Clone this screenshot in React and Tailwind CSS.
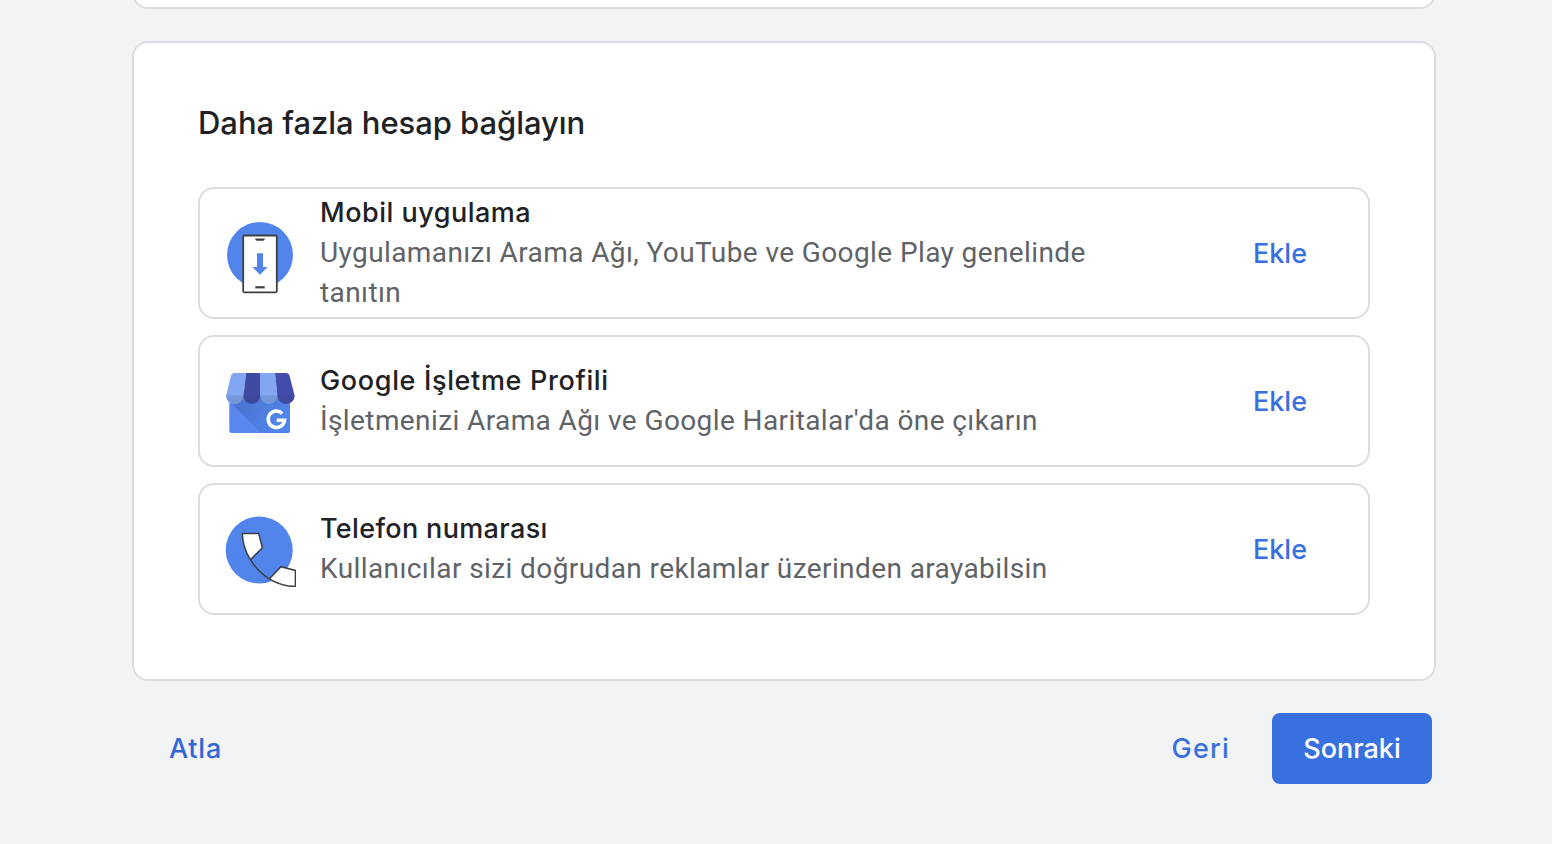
import React from 'react';

const MobileAppIcon = () => (
  <svg viewBox="0 0 72 72" className="w-[72px] h-[72px] overflow-visible" fill="none">
    <circle cx="36" cy="36" r="33" fill="#5285ec" />
    <rect x="19.2" y="16.5" width="33.6" height="56.8" rx="1.2" fill="#fff" stroke="#3c4043" strokeWidth="1.8" />
    <path d="M31 19.500h10c-.6 1.700-1.400 2.300-2.600 2.300h-4.800c-1.200 0-2-.6-2.600-2.300z" fill="#3c4043" />
    <path d="M31.300 68.300h9.400" stroke="#3c4043" strokeWidth="2.200" />
    <path d="M33 34.300h6v13.700h4.600L36 55.800l-7.600-7.800H33z" fill="#5285ec" />
  </svg>
);

const BusinessProfileIcon = () => (
  <svg viewBox="0 0 72 72" className="w-[72px] h-[72px]" fill="none">
    <defs>
      <linearGradient id="store-shade" x1="18" y1="36" x2="56" y2="60" gradientUnits="userSpaceOnUse">
        <stop offset="0" stopColor="#4a76d2" />
        <stop offset="1" stopColor="#5285ec" />
      </linearGradient>
    </defs>
    <rect x="5.3" y="24" width="60.7" height="42" rx="2.5" fill="#5a87ee" />
    <path d="M7 36l30 30h26.500a2.500 2.500 0 0 0 2.500-2.500V30H7z" fill="url(#store-shade)" />
    {/* awning */}
    <path d="M10 6h12l-2.500 23H2L7 8.500Q7.600 6 10 6z" fill="#82a7f0" />
    <path d="M22 6h14v23H19.500z" fill="#3f4aa3" />
    <path d="M36 6h15l2.500 23H36z" fill="#82a7f0" />
    <path d="M51 6h11.500q2.400 0 3 2.500L70.700 29H53.500z" fill="#424caa" />
    <path d="M2 28.500h17.500a8.750 8.750 0 0 1-17.500 0z" fill="#7597d8" />
    <path d="M19.500 28.500H36.200a8.350 8.350 0 0 1-16.700 0z" fill="#3d479b" />
    <path d="M36.200 28.500h17.300a8.650 8.650 0 0 1-17.300 0z" fill="#7597d8" />
    <path d="M53.500 28.500h17.200a8.600 8.600 0 0 1-17.200 0z" fill="#3f499f" />
    <path d="M58.200 46.500A8.200 8.200 0 1 0 60.500 53.200H52.700" stroke="#fff" strokeWidth="3.500" />
  </svg>
);

const PhoneIcon = () => (
  <svg viewBox="0 0 72 72" className="w-[72px] h-[72px]" fill="none">
    <circle cx="35.2" cy="35" r="33.5" fill="#5285ec" />
    <g stroke="#3c4043" strokeWidth="1.500">
      <path d="M18.400 18.400h16.300l3.700 14.300-12 12C21.400 36.500 18.400 27.500 18.400 18.400z" fill="#fff" />
      <path d="M26.400 44.700C31 52.500 37.500 59 45.200 63.900" />
      <path d="M45.200 63.900L57 51.700l14.400 3.700v16.200C62 71.400 53 68.700 45.200 63.900z" fill="#fff" />
    </g>
  </svg>
);

const accounts = [
  {
    title: 'Mobil uygulama',
    description: 'Uygulamanızı Arama Ağı, YouTube ve Google Play genelinde tanıtın',
    icon: MobileAppIcon,
    titleClass: 'tracking-[0.5px]',
  },
  {
    title: 'Google İşletme Profili',
    description: "İşletmenizi Arama Ağı ve Google Haritalar'da öne çıkarın",
    icon: BusinessProfileIcon,
    titleClass: 'tracking-[0.65px]',
  },
  {
    title: 'Telefon numarası',
    description: 'Kullanıcılar sizi doğrudan reklamlar üzerinden arayabilsin',
    icon: PhoneIcon,
    titleClass: 'tracking-[0.35px]',
  },
];

const AccountRow = ({ title, description, icon: Icon, titleClass }) => (
  <div className="flex h-[132px] items-center rounded-2xl border-2 border-[#dadce0] pl-6 pr-[61px]">
    <div className="mr-6 shrink-0 pt-1">
      <Icon />
    </div>
    <div className="w-[800px] leading-10">
      <h3 className={`text-[27px] font-medium text-[#202124] ${titleClass}`}>{title}</h3>
      <p className="font-[Roboto,sans-serif] text-[28px] tracking-[0.4px] text-[#5f6368]">{description}</p>
    </div>
    <button className="ml-auto pt-0.5 text-[27px] font-medium text-[#3870e0]">Ekle</button>
  </div>
);

const App = () => {
  return (
    <div className="flex h-[844px] flex-col overflow-hidden bg-[#f1f3f4] pl-[132px] pr-[116px] font-[Inter,sans-serif]">
      {/* end of the previous section */}
      <div className="-mt-8 h-[41px] shrink-0 rounded-2xl border-2 border-[#dadce0] bg-white" />

      <section className="mt-8 h-[640px] shrink-0 rounded-2xl border-2 border-[#dadce0] bg-white px-16 pt-[60px]">
        <h2 className="text-[31px] font-medium leading-10 tracking-[-0.05px] text-[#202124]">
          Daha fazla hesap bağlayın
        </h2>
        <div className="mt-11 flex flex-col gap-4">
          {accounts.map((account) => (
            <AccountRow key={account.title} {...account} />
          ))}
        </div>
      </section>

      <div className="mt-8 flex items-center justify-between pl-[37px] pr-1 text-[27px] font-medium">
        <button className="pt-0.5 tracking-[0.8px] text-[#3367d6]">Atla</button>
        <div className="flex items-center gap-[42px]">
          <button className="pt-0.5 tracking-[1.2px] text-[#3870e0]">Geri</button>
          <button className="h-[71px] w-40 rounded-lg bg-[#3870e0] pt-0.5 text-white">Sonraki</button>
        </div>
      </div>
    </div>
  );
};

export default App;
